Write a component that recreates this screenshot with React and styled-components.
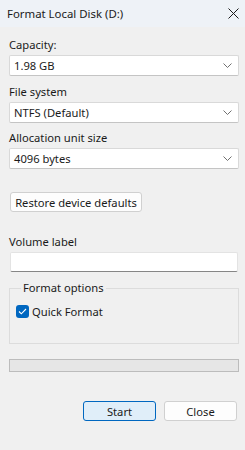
import React from "react";
import styled, { createGlobalStyle } from "styled-components";

const Global = createGlobalStyle`
  html, body {
    margin: 0;
    padding: 0;
    background: #f0f0f0;
  }
  * {
    box-sizing: border-box;
  }
`;

const Window = styled.div`
  width: 245px;
  height: 450px;
  background: #f0f0f0;
  font-family: "Noto Sans", "Liberation Sans", sans-serif;
  font-size: 11.2px;
  color: #1a1a1a;
  display: flex;
  flex-direction: column;
`;

const TitleBar = styled.div`
  height: 27px;
  flex: none;
  background: #eef2f7;
  display: flex;
  align-items: center;
  justify-content: space-between;
  padding: 0 6px 0 7px;

  span {
    font-size: 11.4px;
    color: #1a1a1a;
  }
`;

const Body = styled.div`
  display: flex;
  flex-direction: column;
  padding: 0 6px 0 9px;
`;

const Label = styled.div`
  line-height: 15px;
  margin-top: ${(p) => p.$top}px;
  margin-bottom: 3px;
`;

const Combo = styled.div`
  height: 21px;
  background: #ffffff;
  border: 1px solid #d9d9d9;
  border-bottom-color: #c4c4c4;
  border-radius: 2px;
  display: flex;
  align-items: center;
  justify-content: space-between;
  padding: 0 6px 0 4px;
`;

const Button = styled.button`
  height: 20px;
  font-family: inherit;
  font-size: 11.2px;
  color: #1a1a1a;
  border-radius: 3px;
  padding: 0;
  white-space: nowrap;
  border: 1px solid ${(p) => (p.$primary ? "#0067c0" : "#d0d0d0")};
  background: ${(p) => (p.$primary ? "#e0eef9" : "#fdfdfd")};
  width: ${(p) => p.$width}px;
`;

const RestoreButton = styled(Button)`
  margin: 23px 0 0 1px;
  align-self: flex-start;
`;

const TextBox = styled.div`
  height: 20px;
  margin: 0 1px 0 1px;
  background: #ffffff;
  border: 1px solid #e3e3e3;
  border-bottom: 1px solid #868686;
  border-radius: 2px;
`;

const Group = styled.fieldset`
  margin: 9px 0 0 0;
  padding: 9px 0 0 6px;
  border: 1px solid #dcdcdc;
  height: 63px;

  legend {
    padding: 0 2px;
    margin-left: 5px;
    line-height: 14px;
  }
`;

const CheckRow = styled.label`
  display: flex;
  align-items: center;
  gap: 3px;
  line-height: 15px;
`;

const Box = styled.span`
  width: 13px;
  height: 13px;
  border-radius: 3px;
  background: #0067c0;
  display: flex;
  align-items: center;
  justify-content: center;
`;

const Progress = styled.div`
  height: 13px;
  margin-top: 15px;
  background: #e6e6e6;
  border: 1px solid #bcbcbc;
`;

const Actions = styled.div`
  display: flex;
  justify-content: flex-end;
  gap: 8px;
  margin-top: 29px;
  padding-right: 2px;
`;

const Chevron = () => (
  <svg width="9" height="5" viewBox="0 0 9 5">
    <path d="M0.5 0.5 L4.5 4.5 L8.5 0.5" fill="none" stroke="#606060" strokeWidth="0.9" />
  </svg>
);

const CloseIcon = () => (
  <svg width="11" height="11" viewBox="0 0 11 11">
    <path d="M0.5 0.5 L10.5 10.5 M10.5 0.5 L0.5 10.5" stroke="#1a1a1a" strokeWidth="1" />
  </svg>
);

const Check = () => (
  <svg width="9" height="7" viewBox="0 0 9 7">
    <path d="M1 3.5 L3.3 5.8 L8 1" fill="none" stroke="#ffffff" strokeWidth="1.1" />
  </svg>
);

export default function App() {
  return (
    <Window>
      <Global />
      <TitleBar>
        <span>Format Local Disk (D:)</span>
        <CloseIcon />
      </TitleBar>
      <Body>
        <Label $top={10}>Capacity:</Label>
        <Combo>
          <span>1.98 GB</span>
          <Chevron />
        </Combo>
        <Label $top={8}>File system</Label>
        <Combo>
          <span>NTFS (Default)</span>
          <Chevron />
        </Combo>
        <Label $top={7}>Allocation unit size</Label>
        <Combo>
          <span>4096 bytes</span>
          <Chevron />
        </Combo>
        <RestoreButton $width={132}>Restore device defaults</RestoreButton>
        <Label $top={22}>Volume label</Label>
        <TextBox />
        <Group>
          <legend>Format options</legend>
          <CheckRow>
            <Box>
              <Check />
            </Box>
            Quick Format
          </CheckRow>
        </Group>
        <Progress />
        <Actions>
          <Button $primary $width={73}>Start</Button>
          <Button $width={73}>Close</Button>
        </Actions>
      </Body>
    </Window>
  );
}
